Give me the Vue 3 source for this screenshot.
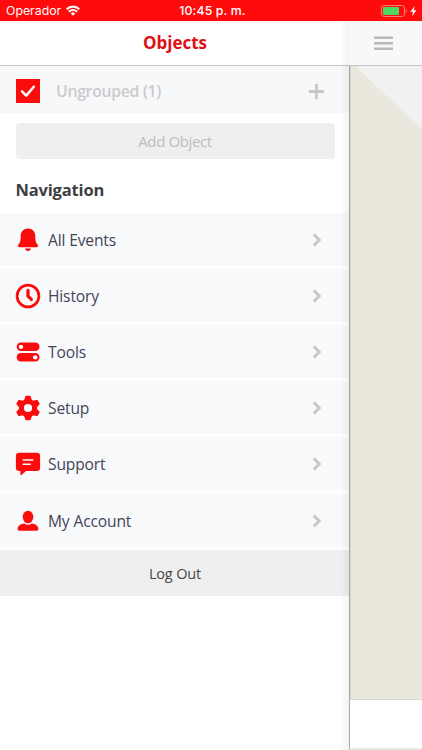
<script setup>
const items = [
  { id: 'events', label: 'All Events' },
  { id: 'history', label: 'History' },
  { id: 'tools', label: 'Tools' },
  { id: 'setup', label: 'Setup' },
  { id: 'support', label: 'Support' },
  { id: 'account', label: 'My Account' },
]
const teeth = [0, 60, 120, 180, 240, 300]
</script>

<template>
  <div class="screen">
    <header class="status">
      <div class="carrier">
        <span>Operador</span>
        <svg class="wifi" viewBox="0 0 14 11" width="14" height="11">
          <g fill="none" stroke="#fff" stroke-width="2.1">
            <path d="M.7 4.200a9 9 0 0 1 12.600 0" />
            <path d="M2.900 6.700a5.800 5.800 0 0 1 8.200 0" />
          </g>
          <path d="M4.800 8.400a3.100 3.100 0 0 1 4.400 0L7 10.800z" fill="#fff" />
        </svg>
      </div>
      <div class="time">10:45 p. m.</div>
      <div class="power">
        <svg viewBox="0 0 38 14" width="38" height="14">
          <rect x=".5" y="1.500" width="23" height="11" rx="2.500" fill="none" stroke="#ff7a70" />
          <rect x="2" y="3" width="16" height="8" rx="1" fill="#4cd964" />
          <path d="M24.800 5v4c1.300-.5 1.300-3.500 0-4z" fill="#ff8a80" />
          <path d="M33.800 2 29.300 7.700h2.700l-1 4.600 4.500-6h-2.800z" fill="#fff" />
        </svg>
      </div>
    </header>

    <div class="body">
      <aside class="drawer">
        <h1 class="title">Objects</h1>
        <div class="group">
          <span class="check">
            <svg viewBox="0 0 24 24" width="24" height="24">
              <path d="M6 12.300l4.200 4.300L17.800 7.700" fill="none" stroke="#fff" stroke-width="2.500" stroke-linecap="round" stroke-linejoin="round" />
            </svg>
          </span>
          <span class="group-name">Ungrouped (1)</span>
          <svg class="plus" viewBox="0 0 15 15" width="15" height="15">
            <path d="M7.500 0v15M0 7.500h15" stroke="#c6c7c8" stroke-width="2.800" />
          </svg>
        </div>
        <button class="add">Add Object</button>
        <h2 class="heading">Navigation</h2>
        <nav class="list">
          <a v-for="item in items" :key="item.id" class="row">
            <svg class="icon" viewBox="0 0 26 26" width="26" height="26" fill="#fb0b0b">
              <template v-if="item.id === 'events'">
                <path d="M13 1.600c-4.500 0-7.300 3.200-7.300 7.500 0 5.200-.7 6.700-2.300 8.500-1 1.200-.6 2.600 1 2.600h17.200c1.600 0 2-1.400 1-2.600-1.600-1.800-2.300-3.300-2.300-8.500 0-4.300-2.800-7.500-7.300-7.500z" />
                <path d="M10 21.600h6c-.2 1.500-1.300 2.400-3 2.400s-2.800-.9-3-2.400z" />
              </template>
              <template v-else-if="item.id === 'history'">
                <circle cx="13" cy="13" r="10.900" fill="none" stroke="#fb0b0b" stroke-width="2.800" />
                <path d="M13 7.500v5.600l3.300 3.300" fill="none" stroke="#fb0b0b" stroke-width="3.300" stroke-linecap="round" stroke-linejoin="round" />
              </template>
              <template v-else-if="item.id === 'tools'">
                <rect x="1.700" y="3.600" width="22.800" height="8.500" rx="4.250" />
                <rect x="1.700" y="14.100" width="22.800" height="8.500" rx="4.250" />
                <circle cx="6" cy="7.850" r="2.200" fill="#fff" />
                <circle cx="20.200" cy="18.350" r="2.200" fill="#fff" />
              </template>
              <template v-else-if="item.id === 'setup'">
                <circle cx="13" cy="13" r="6.600" fill="none" stroke="#fb0b0b" stroke-width="5" />
                <path v-for="angle in teeth" :key="angle" d="M8.900 6 10.200 1.700Q10.400.7 11.400.7h3.200q1 0 1.200 1L17.100 6z" :transform="`rotate(${angle} 13 13)`" />
              </template>
              <template v-else-if="item.id === 'support'">
                <path d="M4.200 1.800h17.600a3.300 3.300 0 0 1 3.300 3.300v11.700a3.300 3.300 0 0 1-3.300 3.300H11l-4.600 4q-1 .7-1-.5v-3.500H4.200a3.300 3.300 0 0 1-3.300-3.300V5.100a3.300 3.300 0 0 1 3.300-3.300z" />
                <path d="M8.300 9h9.600M8.300 13.200h7" stroke="#fff" stroke-width="1.600" stroke-linecap="round" />
              </template>
              <template v-else>
                <ellipse cx="13" cy="9" rx="5.300" ry="6.300" />
                <path d="M9.300 15.500c1 .9 2.300 1.300 3.700 1.300s2.700-.4 3.700-1.300c3.600.4 6.700 2.300 6.700 5.300 0 1.300-.6 1.900-1.800 1.900H4.400c-1.200 0-1.800-.6-1.800-1.900 0-3 3.100-4.900 6.700-5.300z" />
              </template>
            </svg>
            <span class="label">{{ item.label }}</span>
            <svg class="chevron" viewBox="0 0 10 14" width="10" height="14">
              <path d="M1.700 1.500 7.200 7l-5.500 5.500" fill="none" stroke="#c6c7c8" stroke-width="3" />
            </svg>
          </a>
        </nav>
        <button class="logout">Log Out</button>
      </aside>

      <main class="page">
        <div class="toolbar">
          <svg viewBox="0 0 19 15" width="19" height="15">
            <path d="M0 1.800h19M0 7.300h19M0 12.800h19" stroke="#b9b9b9" stroke-width="2.500" />
          </svg>
        </div>
        <div class="map">
          <svg viewBox="0 0 72 64" width="72" height="64"><path d="M5.500 0H72v64z" fill="#f1f1f2" /></svg>
        </div>
        <div class="bottom"></div>
      </main>
    </div>
  </div>
</template>

<style>
body { background: #fff; overflow: hidden; }
</style>

<style scoped>
* { box-sizing: border-box; }
.screen {
  width: 422px;
  height: 750px;
  display: flex;
  flex-direction: column;
  overflow: hidden;
  font-family: "Open Sans", "Noto Sans", sans-serif;
}
.status {
  height: 21px;
  flex: none;
  display: grid;
  grid-template-columns: 1fr auto 1fr;
  align-items: center;
  padding: 0 3px 0 6px;
  background: #fe0b0b;
  color: #fff;
  font: 12.3px/21px Inter, "Liberation Sans", sans-serif;
}
.carrier { display: flex; align-items: center; gap: 5px; }
.time { font-weight: 500; letter-spacing: .15px; }
.power { display: flex; justify-content: flex-end; }
.body { flex: 1; display: flex; min-height: 0; }
.drawer {
  position: relative;
  width: 349px;
  flex: none;
  display: flex;
  flex-direction: column;
  background: #fff;
}
.drawer::after {
  content: "";
  position: absolute;
  inset: 0 0 0 auto;
  width: 9px;
  background: linear-gradient(to right, rgba(0, 0, 0, 0), rgba(0, 0, 0, .05));
}
.title {
  margin: 0;
  height: 45px;
  padding-left: 1px;
  border-bottom: 1px solid #c5c5c7;
  text-align: center;
  font-size: 17px;
  line-height: 44px;
  font-weight: 700;
  color: #dd1014;
}
.group {
  height: 47px;
  display: flex;
  align-items: center;
  padding: 3px 25px 0 16px;
  background: #f7f8fa;
}
.check { width: 24px; height: 24px; background: #fb0b0b; }
.check svg { display: block; }
.group-name {
  margin-left: 16px;
  flex: 1;
  font-size: 15.8px;
  letter-spacing: -.3px;
  line-height: 24px;
  font-weight: 600;
  color: #cacbcd;
}
.add {
  height: 36px;
  margin: 10px 14.5px 0 15.5px;
  padding: 0;
  border: 0;
  border-radius: 4px;
  background: #efefef;
  color: #bdbdbf;
  font: 15px/36px "Open Sans", sans-serif;
  letter-spacing: -.38px;
}
.heading {
  margin: 0;
  height: 53px;
  padding: 1px 0 0 15.4px;
  font-size: 16.5px;
  letter-spacing: -.15px;
  line-height: 60px;
  font-weight: 700;
  color: #3e3e40;
}
.list { display: flex; flex-direction: column; gap: 3.2px; padding-top: .6px; }
.row {
  height: 53px;
  display: flex;
  align-items: center;
  padding: 1px 27px 0 14.6px;
  background: #f8f9fb;
}
.icon { flex: none; }
.label { flex: 1; margin-left: 7.4px; font-size: 15.6px; letter-spacing: -.15px; color: #454458; }
.logout {
  height: 46px;
  margin-top: 3px;
  padding: 2px 0 0 1px;
  border: 0;
  background: #efefef;
  color: #454547;
  font: 14.5px/44px "Open Sans", sans-serif;
  letter-spacing: -.15px;
}
.page { flex: 1; display: flex; flex-direction: column; min-width: 0; }
.toolbar {
  height: 45px;
  flex: none;
  display: flex;
  align-items: center;
  padding-left: 25px;
  border-bottom: 1px solid #c5c5c7;
  background: #f8f8f8;
}
.map {
  flex: 1;
  border-left: 1px solid #a9a8a4;
  box-shadow: inset 1px 0 #d6d4c9;
  background: #eae8dc;
}
.map svg { display: block; }
.bottom {
  height: 51px;
  border: 1px solid #aaa;
  border-top-color: #d8d8d8;
  border-right: 0;
  border-bottom: 2px solid #e8e8e8;
  background: #fff;
}
</style>
